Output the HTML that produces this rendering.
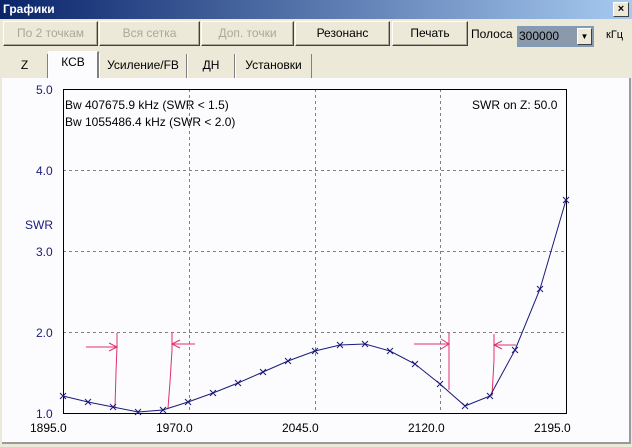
<!DOCTYPE html>
<html><head><meta charset="utf-8"><style>
body{margin:0;width:632px;height:447px;overflow:hidden;background:#ECE9D8;font-family:"Liberation Sans","DejaVu Sans",sans-serif;position:relative}
.t{position:absolute;left:0;top:0;width:632px;height:19px;background:linear-gradient(90deg,#0A246A,#A6CAF0);color:#fff;font-weight:bold;font-size:12px;line-height:19px;padding-left:3px;box-sizing:border-box}
.x{position:absolute;right:3px;top:2px;width:14px;height:13px;background:#ECE9D8;border:1px solid;border-color:#fff #404040 #404040 #fff;color:#000;font-size:11px;line-height:12px;text-align:center;font-weight:bold}
.b{position:absolute;top:21px;height:25px;box-sizing:border-box;border:1px solid;border-color:#fff #404040 #404040 #fff;box-shadow:inset -1px -1px #ACA899;font-size:12px;line-height:23px;text-align:center;color:#000}
.b.d{color:#ACA899}
.l{position:absolute;font-size:12px}
.tab{position:absolute;top:54px;height:24px;box-sizing:border-box;border-left:1px solid #fff;border-right:1px solid #808080;font-size:12px;line-height:22px;text-align:center}
</style></head><body>
<div class="t">Графики<div class="x">×</div></div>
<div class="b d" style="left:3px;width:95px">По 2 точкам</div>
<div class="b d" style="left:99px;width:101px">Вся сетка</div>
<div class="b d" style="left:201px;width:93px">Доп. точки</div>
<div class="b" style="left:295px;width:95px">Резонанс</div>
<div class="b" style="left:392px;width:76px">Печать</div>
<div class="l" style="left:471px;top:27px">Полоса</div>
<div style="position:absolute;left:517px;top:26px;width:77px;height:21px;box-sizing:border-box;border:1px solid #7F9DB9;background:#8A9AAA;font-size:12px;line-height:19px;padding-left:1px">300000<div style="position:absolute;right:1px;top:1px;width:15px;height:17px;background:#ECE9D8;border:1px solid;border-color:#fff #404040 #404040 #fff;box-sizing:border-box;font-size:8px;text-align:center;line-height:15px">▼</div></div>
<div class="l" style="left:606px;top:29px;font-size:11px">кГц</div>
<div class="tab" style="left:2px;width:46px;border-left:none">Z</div>
<div class="tab" style="left:48px;width:51px;top:51px;height:28px;background:#FCFCFE;border-top:1px solid #fff;line-height:20px;border-right:2px solid #808080">КСВ</div>
<div class="tab" style="left:99px;width:88px">Усиление/FB</div>
<div class="tab" style="left:187px;width:48px">ДН</div>
<div class="tab" style="left:235px;width:77px">Установки</div>
<div style="position:absolute;left:2px;top:78px;width:627px;height:364px;background:#FCFCFE;border-right:2px solid #9A9A9A;border-bottom:2px solid #9A9A9A"></div>
<svg style="position:absolute;left:0;top:0" width="632" height="447">
<g stroke="#808080" stroke-dasharray="3,3" stroke-width="1">
<line x1="189.5" y1="89" x2="189.5" y2="413"/><line x1="315.5" y1="89" x2="315.5" y2="413"/><line x1="440.5" y1="89" x2="440.5" y2="413"/>
<line x1="63" y1="170.5" x2="566" y2="170.5"/><line x1="63" y1="251.5" x2="566" y2="251.5"/><line x1="63" y1="332.5" x2="566" y2="332.5"/>
</g>
<rect x="63.5" y="89.5" width="503" height="324" fill="none" stroke="#000" stroke-width="1"/>
<g font-size="12" fill="#000">
<text x="65" y="109">Bw 407675.9 kHz (SWR &lt; 1.5)</text>
<text x="65" y="126">Bw 1055486.4 kHz (SWR &lt; 2.0)</text>
<text x="472" y="109">SWR on Z: 50.0</text>
<text x="30" y="432">1895.0</text><text x="156" y="432">1970.0</text><text x="282" y="432">2045.0</text><text x="408" y="432">2120.0</text><text x="534" y="432">2195.0</text>
</g>
<g font-size="12" fill="#1A1A7A">
<text x="36" y="94">5.0</text><text x="36" y="175">4.0</text><text x="36" y="256">3.0</text><text x="36" y="337">2.0</text><text x="36" y="418">1.0</text>
<text x="25" y="229">SWR</text>
</g>
<g stroke="#E0306A" fill="none" stroke-width="1">
<path d="M86 347H117M109 343l8 4-8 4M117 333V347L116 372L115 407"/>
<path d="M195 344H172M180 340l-8 4 8 4M172 332V350L170 382L168 408"/>
<path d="M414 344H449M441 339l8 5-8 5M449 333V358L449 390"/>
<path d="M516 345H494M502 341l-8 4 8 4M494 334V360L492 396"/>
</g>
<polyline fill="none" stroke="#1A1A7A" stroke-width="1" points="63,396 88,402 113,407 138,412 163,410 188,402 213,393 238,383 263,372 288,361 315,351 340,345 365,344 390,351 415,364 440,384 465,406 490,396 515,350 540,289 566,200"/>
<g stroke="#1A1A7A" stroke-width="1">
<path d="M60,393l6,6M60,399l6,-6M85,399l6,6M85,405l6,-6M110,404l6,6M110,410l6,-6M135,409l6,6M135,415l6,-6M160,407l6,6M160,413l6,-6M185,399l6,6M185,405l6,-6M210,390l6,6M210,396l6,-6M235,380l6,6M235,386l6,-6M260,369l6,6M260,375l6,-6M285,358l6,6M285,364l6,-6M312,348l6,6M312,354l6,-6M337,342l6,6M337,348l6,-6M362,341l6,6M362,347l6,-6M387,348l6,6M387,354l6,-6M412,361l6,6M412,367l6,-6M437,381l6,6M437,387l6,-6M462,403l6,6M462,409l6,-6M487,393l6,6M487,399l6,-6M512,347l6,6M512,353l6,-6M537,286l6,6M537,292l6,-6M563,197l6,6M563,203l6,-6"/>
</g>
</svg>
</body></html>
